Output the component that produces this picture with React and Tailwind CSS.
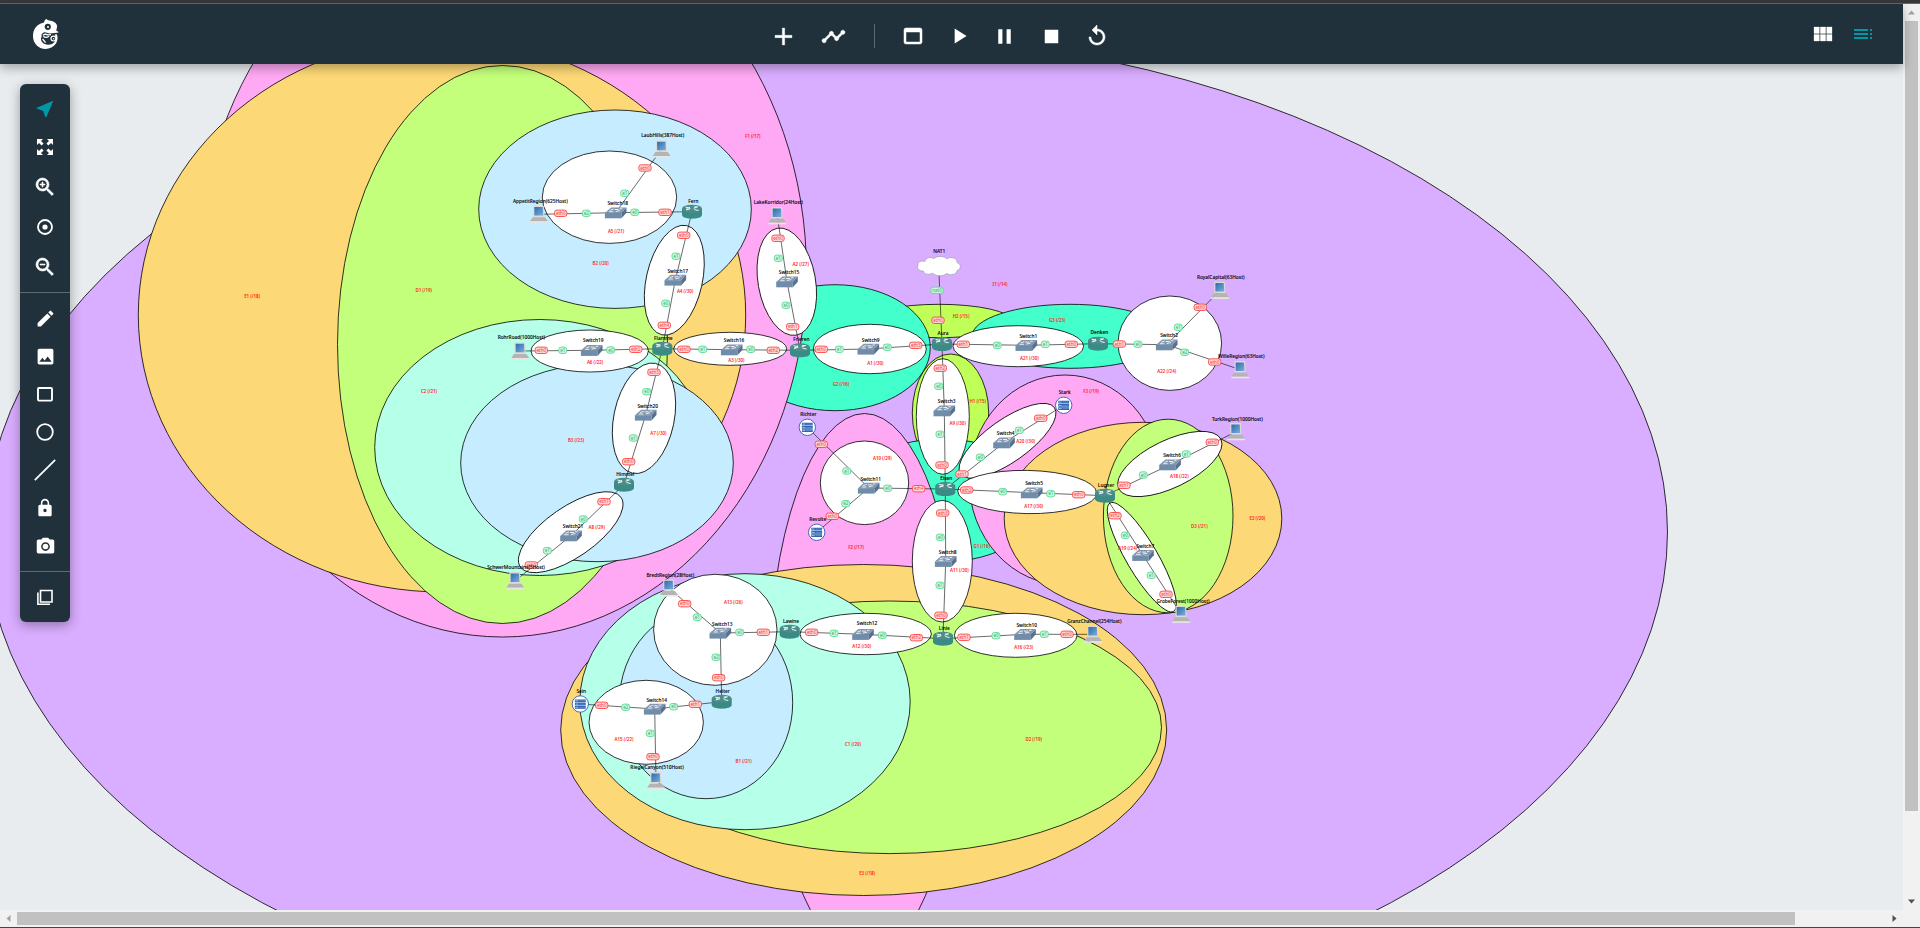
import React from "react";
import {
  MdAdd,
  MdTimeline,
  MdWebAsset,
  MdPlayArrow,
  MdPause,
  MdStop,
  MdReplay,
  MdViewModule,
  MdToc,
  MdNearMe,
  MdZoomIn,
  MdZoomOut,
  MdEdit,
  MdImage,
  MdLock,
  MdPhotoCamera,
} from "react-icons/md";

const PURPLE = "#d9adff";
const PINK = "#ffa8f3";
const ORANGE = "#fdd876";
const GREEN = "#c3ff7a";
const LIME = "#c0ff57";
const TEAL = "#43ffcb";
const MINT = "#b6ffe9";
const SKY = "#c6edff";
const WHITE = "#ffffff";

// fill, cx, cy, rx, ry, rotation; listed back to front
const ELLIPSES = [
  [PURPLE, 826.5, 532, 841, 500],
  [LIME, 939, 321, 73, 16.7],
  [LIME, 950.5, 413, 38.2, 59],
  [TEAL, 835, 347.7, 95.3, 63],
  [TEAL, 1070, 336.3, 98, 32],
  [TEAL, 942, 500.5, 100, 61.5],
  [PINK, 502.5, 272, 304, 365],
  [PINK, 864.5, 685.5, 96, 272],
  [PINK, 1065, 480, 96, 105],
  [ORANGE, 442, 315, 303.7, 277],
  [ORANGE, 1143, 518.5, 138.8, 96.2],
  [ORANGE, 863.7, 730, 303, 165.5],
  [GREEN, 502.5, 344.5, 165, 279],
  [GREEN, 889.5, 727.3, 272, 126.3],
  [GREEN, 1168.2, 516, 64.8, 96.8],
  [MINT, 539.7, 447.5, 165, 128],
  [MINT, 745, 701.7, 165.2, 128],
  [SKY, 615, 209.2, 136.3, 99.2],
  [SKY, 597, 463, 136.3, 98.7],
  [SKY, 706, 702.7, 86.7, 96],
  [WHITE, 609.5, 197.2, 67.2, 46.2],
  [WHITE, 674.3, 280.2, 28, 56, 12.8],
  [WHITE, 786.8, 281.7, 28.7, 54.3, -10],
  [WHITE, 589.7, 351, 58.7, 21],
  [WHITE, 730.2, 348.8, 56.5, 16.5],
  [WHITE, 869.8, 349, 56.5, 24.7],
  [WHITE, 644, 418.3, 30.2, 56.1, 11.7],
  [WHITE, 570.7, 532.2, 61.2, 25.1, -34.7],
  [WHITE, 942.8, 416.5, 26.5, 57.8],
  [WHITE, 1018.3, 346.2, 65.3, 20.5],
  [WHITE, 1169.8, 343.2, 51.8, 47.2],
  [WHITE, 1007.5, 440.8, 57.5, 21.2, -35.3],
  [WHITE, 1027.2, 492, 69.5, 21.6, 1],
  [WHITE, 864.5, 482.8, 44.2, 41.8],
  [WHITE, 942.3, 561.2, 30, 60.8],
  [WHITE, 865.7, 634, 65.7, 20.7],
  [WHITE, 1015.7, 635.3, 61.3, 22],
  [WHITE, 715.3, 629.8, 61.7, 55.5],
  [WHITE, 646.2, 722.3, 57.2, 42],
  [WHITE, 1169.8, 464, 56.8, 23.7, -25.8],
  [WHITE, 1141.8, 557.2, 15.6, 62.8, -30.4],
];

const SUBNETS = [
  ["F1 (/17)", 752.7, 136.7],
  ["E1 (/18)", 252, 296.7],
  ["D1 (/19)", 423.7, 290.3],
  ["A5 (/21)", 616, 231.7],
  ["B2 (/20)", 600.7, 263.3],
  ["A4 (/30)", 685, 291.3],
  ["A2 (/27)", 800.7, 264.3],
  ["A6 (/22)", 595, 362.7],
  ["A3 (/30)", 736.3, 360.3],
  ["B3 (/23)", 576, 440.3],
  ["A7 (/30)", 658.3, 433.3],
  ["A8 (/29)", 596.7, 527.3],
  ["C2 (/21)", 429, 391.3],
  ["G2 (/16)", 841, 384.3],
  ["A1 (/30)", 875.3, 363.3],
  ["H2 (/15)", 961, 316.7],
  ["I1 (/14)", 1000, 284.7],
  ["G3 (/23)", 1057.3, 320.3],
  ["A21 (/30)", 1029.3, 358.3],
  ["A22 (/24)", 1166.7, 371.7],
  ["H1 (/15)", 977.7, 401.3],
  ["A9 (/30)", 957.7, 423.3],
  ["F3 (/19)", 1091, 391.7],
  ["A20 (/30)", 1025.7, 441.3],
  ["E2 (/20)", 1257.3, 518.3],
  ["D3 (/21)", 1199.3, 526.3],
  ["A18 (/22)", 1179.3, 476.3],
  ["A10 (/29)", 882.3, 458.3],
  ["F2 (/17)", 856, 547.3],
  ["A17 (/30)", 1033.7, 506.7],
  ["A11 (/30)", 959.3, 570.3],
  ["G1 (/16)", 981.7, 546.7],
  ["A12 (/30)", 861.7, 646.7],
  ["A16 (/23)", 1023.7, 647.3],
  ["A13 (/26)", 733.3, 602.7],
  ["A15 (/22)", 624, 739.3],
  ["B1 (/21)", 743.7, 761.3],
  ["C1 (/20)", 853, 744.3],
  ["D2 (/19)", 1033.7, 739.3],
  ["E3 (/18)", 867, 873.3],
  ["A19 (/24)", 1127.7, 548.7],
];

// name: kind, icon centre, label centre
const NODES = {
  "LaubHills(387Host)": ["pc", 661.7, 149, 662.7, 135],
  "AppetitRegion(625Host)": ["pc", 539, 214.3, 540.3, 201],
  "LakeKorridor(24Host)": ["pc", 777.3, 215.7, 778.3, 202],
  "RohrRoad(1000Host)": ["pc", 520.3, 351, 521.3, 337],
  "SchwerMountains(5Host)": ["pc", 515.3, 580.7, 516, 567],
  "BredtRegion(28Host)": ["pc", 669, 588, 670.3, 575],
  "RiegelCanyon(510Host)": ["pc", 656, 780.7, 657, 767],
  "GranzChannel(254Host)": ["pc", 1093, 634.3, 1094.3, 621],
  "GrobeForest(1000Host)": ["pc", 1181.3, 614.3, 1183, 601.3],
  "TurkRegion(1000Host)": ["pc", 1236, 431.7, 1237.3, 419],
  "RoyalCapital(63Host)": ["pc", 1220, 290.3, 1220.7, 277],
  "WilleRegion(63Host)": ["pc", 1240.3, 369.7, 1241.3, 356],
  Fern: ["router", 692, 211.7, 693.3, 201],
  Flamme: ["router", 662.3, 348.7, 663.3, 338],
  Frieren: ["router", 800, 350.3, 801.3, 339.3],
  Himmel: ["router", 624, 484.7, 625.3, 474],
  Aura: ["router", 942, 344, 943, 333],
  Denken: ["router", 1098, 343.7, 1099.3, 332.3],
  Eisen: ["router", 945.3, 489, 946.3, 478],
  Lugner: ["router", 1105, 495.7, 1106, 485],
  Lawine: ["router", 789.7, 631.7, 791, 621.3],
  Linie: ["router", 943, 638.7, 944.3, 628],
  Heiter: ["router", 721.7, 701.7, 722.7, 691],
  Richter: ["server", 807.3, 427.3, 808.3, 414],
  Revolte: ["server", 816.7, 532.3, 817.7, 519],
  Stark: ["server", 1063.7, 405.3, 1064.7, 392],
  Sein: ["server", 580.3, 704, 581.3, 691],
  NAT1: ["cloud", 938.7, 266, 939.3, 251],
  Switch18: ["switch", 615.7, 212.7, 617.7, 203],
  Switch17: ["switch", 675.3, 280, 677.7, 271],
  Switch15: ["switch", 787, 281.7, 789, 272],
  Switch19: ["switch", 591.7, 350.3, 593.3, 340],
  Switch16: ["switch", 731.7, 349.7, 734, 340],
  Switch9: ["switch", 868.3, 349, 870.7, 340],
  Switch20: ["switch", 645.7, 415, 647.7, 406],
  Switch21: ["switch", 571, 535.7, 573, 526],
  Switch3: ["switch", 944.3, 410.7, 946.7, 401],
  Switch1: ["switch", 1026.3, 345.3, 1028.3, 336],
  Switch2: ["switch", 1166.7, 344.7, 1169, 335],
  Switch4: ["switch", 1004, 442.7, 1005.7, 433],
  Switch5: ["switch", 1031.7, 492.7, 1034, 483.3],
  Switch6: ["switch", 1170, 464.7, 1172, 455],
  Switch7: ["switch", 1143, 555.3, 1145.3, 546],
  Switch8: ["switch", 945.7, 561.3, 947.7, 552],
  Switch10: ["switch", 1025, 634.3, 1026.7, 625],
  Switch11: ["switch", 868.7, 488, 870.7, 479],
  Switch12: ["switch", 863, 634.3, 867, 623],
  Switch13: ["switch", 720.3, 633, 722.3, 624],
  Switch14: ["switch", 654.7, 709, 656.7, 700],
};

// from, to, then each end's port: name, x, y
const LINKS = [
  ["Switch18", "LaubHills(387Host)", ["eth0", 645, 168], ["e1", 624.7, 193.3]],
  ["Switch18", "AppetitRegion(625Host)", ["eth0", 560.7, 213.3], ["e2", 586.3, 213.3]],
  ["Switch18", "Fern", ["e0", 634.7, 212.3], ["eth1", 665, 212.3]],
  ["Fern", "Switch17", ["eth0", 683.7, 235.3], ["e1", 676, 256.3]],
  ["Switch17", "Flamme", ["e0", 665.7, 303.3], ["eth4", 664.3, 325.3]],
  ["LakeKorridor(24Host)", "Switch15", ["eth0", 778, 238.3], ["e1", 778.3, 258.3]],
  ["Switch15", "Frieren", ["e0", 786, 305.3], ["eth1", 792.7, 326.7]],
  ["RohrRoad(1000Host)", "Switch19", ["eth0", 541.3, 350.3], ["e1", 562.7, 350.3]],
  ["Switch19", "Flamme", ["e0", 610.7, 350], ["eth2", 635.7, 349.3]],
  ["Flamme", "Switch16", ["eth0", 684, 349.3], ["e1", 702.7, 349.3]],
  ["Switch16", "Frieren", ["e0", 750.7, 349.3], ["eth2", 773.3, 350.3]],
  ["Frieren", "Switch9", ["eth0", 821.3, 349.3], ["e1", 839.3, 349.3]],
  ["Switch9", "Aura", ["e0", 887.3, 347.3], ["eth3", 915.7, 345.3]],
  ["Flamme", "Switch20", ["eth3", 654, 372.3], ["e0", 646.7, 391.7]],
  ["Switch20", "Himmel", ["e1", 633.3, 438], ["eth0", 628.7, 461.7]],
  ["Himmel", "Switch21", ["eth1", 604, 501.7], ["e0", 583.3, 519]],
  ["Switch21", "SchwerMountains(5Host)", ["e1", 547.3, 550.7], ["eth0", 531.3, 565]],
  ["NAT1", "Aura", ["nat0", 937, 290.3], ["eth0", 938, 320.3]],
  ["Aura", "Switch1", ["eth1", 963.3, 344.3], ["e0", 997.3, 345.3]],
  ["Switch1", "Denken", ["e1", 1045.3, 344.3], ["eth0", 1071.3, 344.3]],
  ["Denken", "Switch2", ["eth1", 1119.3, 344], ["e0", 1138, 344.3]],
  ["Switch2", "RoyalCapital(63Host)", ["e1", 1178.3, 327.3], ["eth0", 1200.3, 307.3]],
  ["Switch2", "WilleRegion(63Host)", ["e2", 1184.7, 352.3], ["eth0", 1214.7, 362]],
  ["Aura", "Switch3", ["eth2", 940.3, 368.3], ["e0", 938.7, 386.3]],
  ["Switch3", "Eisen", ["e1", 940, 434.3], ["eth0", 942, 465]],
  ["Eisen", "Switch4", ["eth1", 962, 474], ["e0", 980.3, 457.3]],
  ["Switch4", "Stark", ["e1", 1019.3, 430.3], ["eth0", 1040.7, 418.3]],
  ["Eisen", "Switch5", ["eth2", 966.7, 490], ["e0", 1002.7, 491.7]],
  ["Switch5", "Lugner", ["e1", 1050.7, 493.7], ["eth0", 1078.7, 494.7]],
  ["Eisen", "Switch11", ["e0", 887.7, 488.3], ["eth4", 918.7, 488.7]],
  ["Switch11", "Richter", ["e1", 846.7, 471], ["eth0", 821.3, 444.3]],
  ["Switch11", "Revolte", ["e2", 845.7, 503.7], ["eth0", 832.3, 516.3]],
  ["Eisen", "Switch8", ["eth3", 942.7, 513], ["e0", 940.3, 537.3]],
  ["Switch8", "Linie", ["e1", 940, 585.3], ["eth0", 941, 615.3]],
  ["Linie", "Switch12", ["eth2", 916.3, 637.7], ["e0", 882.3, 635.3]],
  ["Switch12", "Lawine", ["e1", 834, 633.3], ["eth0", 811.7, 632.3]],
  ["Linie", "Switch10", ["eth1", 964, 637.3], ["e0", 996, 635.7]],
  ["Switch10", "GranzChannel(254Host)", ["e1", 1044.3, 634.3], ["eth0", 1067, 634.3]],
  ["Lawine", "Switch13", ["eth1", 763.3, 632.3], ["e0", 739.7, 632.3]],
  ["Switch13", "BredtRegion(28Host)", ["e1", 697.3, 617.3], ["eth0", 684.7, 603.7]],
  ["Switch13", "Heiter", ["e2", 716, 657.3], ["eth0", 718.7, 677.7]],
  ["Switch14", "Heiter", ["e0", 673.7, 706.7], ["eth1", 695.3, 704.3]],
  ["Switch14", "Sein", ["e2", 625.7, 707.3], ["eth0", 601.7, 705.3]],
  ["Switch14", "RiegelCanyon(510Host)", ["e1", 650.3, 733.3], ["eth0", 653, 756.7]],
  ["Lugner", "Switch6", ["eth1", 1124, 485.3], ["e0", 1143.3, 475]],
  ["Switch6", "TurkRegion(1000Host)", ["e1", 1186.3, 454], ["eth0", 1212.3, 442.3]],
  ["Lugner", "Switch7", ["eth2", 1115, 515.7], ["e0", 1125.3, 535.3]],
  ["Switch7", "GrobeForest(1000Host)", ["e1", 1151.3, 575.3], ["eth0", 1166, 594.3]],
];

function PcIcon() {
  return (
    <g>
      <path d="M-5.8 -8.6H4.8L5.4 2.8H-5.8Z" fill="#dadad6" />
      <path d="M-4.6 -7.3H3.7L4.2 1.2H-4.6Z" fill="url(#screen)" />
      <path d="M-6.3 3H6L9 7H-9Z" fill="#b4b4b4" />
      <path d="M-9 7H9V8.6H-9Z" fill="#e6e6e4" />
    </g>
  );
}

function RouterIcon() {
  return (
    <g>
      <path d="M-10 -3.2V3.4C-10 8.2 10 8.2 10 3.4V-3.2Z" fill="#3a8a86" />
      <ellipse cx="0" cy="-3" rx="10" ry="4" fill="#4d8c88" />
      <path
        d="M-6.5 -4.6L-2 -3.6M-6 -1.8L-1.6 -3M1.6 -3.4L6 -5M2.4 -2.2L6.6 -1.2M-2.6 -4.8V-3.3M2.2 -4.8H4.8M-5.6 -2.8H-3.6"
        stroke="#e8fbf9"
        strokeWidth="1"
        fill="none"
      />
    </g>
  );
}

function SwitchIcon() {
  return (
    <g>
      <path d="M-10.8 0.2L-4.6 -5.2H10.8L5.8 0.2Z" fill="#8398af" />
      <path d="M-10.8 0.2H5.8V5.6H-10.8Z" fill="#6f8cab" />
      <path d="M5.8 0.2L10.8 -5.2V0L5.8 5.6Z" fill="#56718f" />
      <path
        d="M-5.6 -2.4L-2 -3.6M-1 -3.2H3M-6.8 -1H-2.4M0 -1.2L4.4 -2.2M4 -4H6.6"
        stroke="#f4f7fa"
        strokeWidth="0.9"
        fill="none"
      />
    </g>
  );
}

function ServerIcon() {
  return (
    <g>
      <circle r="8.2" fill="#fff" stroke="#2a5fb0" strokeWidth="0.9" />
      <path d="M-5.4 -4.6H5.4V-1.8H-5.4ZM-5.4 -1.2H5.4V1.4H-5.4ZM-5.4 2H5.4V4.7H-5.4Z" fill="#2c62b4" />
      <path d="M-4.8 -3.2H-2M-4.8 0.1H-2M-4.8 3.3H-2" stroke="#dce8f8" strokeWidth="0.7" />
      <path d="M-1 -3.2H4.8M-1 0.1H4.8M-1 3.3H4.8" stroke="#7fa5da" strokeWidth="0.6" />
    </g>
  );
}

function CloudIcon() {
  return (
    <path
      d="M-14 -4.5C-13 -8.6 -8 -9.6 -5 -7.4C-2 -10.4 6 -10.2 8 -7.2C12 -10 19 -8 18.4 -3.4C23 -1.6 22.6 3.6 18.4 4.4C18.6 8.6 11 10 8 7.4C5 10.6 -3 10.6 -6 7.2C-10 9.4 -15.6 8 -15.4 5C-20 5.2 -22.6 1.6 -20.6 -0.8C-21.8 -4 -17.4 -5.8 -14 -4.5Z"
      fill="#fff"
      stroke="#a9a8bc"
      strokeWidth="0.9"
    />
  );
}

const NODE_ICONS = { pc: PcIcon, router: RouterIcon, switch: SwitchIcon, server: ServerIcon, cloud: CloudIcon };

function Port({ port }) {
  const [name, x, y] = port;
  const long = name.length > 2;
  const green = name[0] === "n" || !long;
  const w = long ? 12.4 : 8;
  return (
    <g transform={`translate(${x} ${y})`}>
      <rect
        x={-w / 2}
        y={-3.2}
        width={w}
        height={6.4}
        rx={2.4}
        fill={green ? "#ccf5de" : "#ffd6d6"}
        stroke={green ? "#55dc94" : "#ff4444"}
        strokeWidth="0.9"
      />
      <text y="1.6" textAnchor="middle" className="text-[4.5px]" fill={green ? "#3fae72" : "#f04545"}>
        {name}
      </text>
    </g>
  );
}

function Topology() {
  return (
    <svg className="block h-full w-full font-['Noto_Sans',sans-serif]" viewBox="0 64 1903 846">
      <defs>
        <linearGradient id="screen" x1="0" y1="0" x2="1" y2="1">
          <stop offset="0" stopColor="#2f6ba8" />
          <stop offset="1" stopColor="#79aede" />
        </linearGradient>
      </defs>
      {ELLIPSES.map(([fill, cx, cy, rx, ry, rot = 0], i) => (
        <ellipse
          key={i}
          cx={cx}
          cy={cy}
          rx={rx}
          ry={ry}
          fill={fill}
          stroke="#000"
          strokeWidth="0.8"
          transform={`rotate(${rot} ${cx} ${cy})`}
        />
      ))}
      {SUBNETS.map(([label, x, y]) => (
        <text
          key={label}
          x={x}
          y={y + 1.6}
          textAnchor="middle"
          className="text-[4.5px] font-semibold tracking-[-0.05px]"
          fill="#ff1a1a"
        >
          {label}
        </text>
      ))}
      {LINKS.map(([from, to]) => (
        <line
          key={from + to}
          x1={NODES[from][1]}
          y1={NODES[from][2]}
          x2={NODES[to][1]}
          y2={NODES[to][2]}
          stroke="#000"
          strokeOpacity="0.65"
          strokeWidth="0.9"
        />
      ))}
      {Object.entries(NODES).map(([name, [kind, x, y]]) => {
        const Icon = NODE_ICONS[kind];
        return (
          <g key={name} transform={`translate(${x} ${y})`}>
            <Icon />
          </g>
        );
      })}
      {LINKS.map(([from, to, a, b]) => (
        <g key={from + to}>
          <Port port={a} />
          <Port port={b} />
        </g>
      ))}
      {Object.entries(NODES).map(([name, [, , , lx, ly]]) => (
        <text
          key={name}
          x={lx}
          y={ly + 1.7}
          textAnchor="middle"
          className="text-[4.8px] font-medium"
          fill="#000"
          stroke="#000"
          strokeWidth="0.08"
        >
          {name}
        </text>
      ))}
    </svg>
  );
}

function Logo() {
  return (
    <svg width="26" height="30" viewBox="0 0 26 30" fill="none">
      <path
        fill="#fff"
        d="M13.4 0C14.8 1.7 17.4 1.4 19.6 2.3C22.8 3.5 24.8 6 24 8.6L23.2 11.4L26 13.2L23.6 14.8C25 17.4 25 21.6 23 24.6C20.6 28.2 16.6 30 12.6 30C5.4 30 0 24.4 0 17C0 10.4 4 4.8 11 3.6C11.2 2 12 0.6 13.4 0Z"
      />
      <path
        fill="#20313b"
        d="M26 13.4L17 14.6C14.6 14.2 12.4 13 10.8 13.4C9 14 7.8 15.6 8.8 17.4C7 19.8 8.4 23 11.2 24.8C14.4 26.6 18.8 26 21 23.6C22.8 21.6 23.4 18 22 16.2L21.6 15.4L26 14.8Z"
      />
      <circle cx="14.8" cy="7.8" r="3.1" fill="#20313b" />
      <circle cx="15" cy="8" r="1" fill="#fff" />
      <circle cx="20.4" cy="19.6" r="2.4" stroke="#fff" strokeWidth="1.2" />
      <circle cx="20.6" cy="19.8" r="0.7" fill="#fff" />
      <path
        d="M10 16.4C11.4 14.8 13.4 15.2 14.8 15.8L18 15.6M10.4 17.2C12 18.8 14 18.6 16 17.2M9.6 20L12.6 23.6"
        stroke="#fff"
        strokeWidth="1.3"
      />
    </svg>
  );
}

function FitIcon() {
  return (
    <svg width="24" height="24" viewBox="0 0 24 24" fill="#fff">
      <path d="M4 4H10L8 6L10.6 8.6L8.6 10.6L6 8L4 10Z" />
      <path d="M20 4H14L16 6L13.4 8.6L15.4 10.6L18 8L20 10Z" />
      <path d="M4 20H10L8 18L10.6 15.4L8.6 13.4L6 16L4 14Z" />
      <path d="M20 20H14L16 18L13.4 15.4L15.4 13.4L18 16L20 14Z" />
    </svg>
  );
}

function TargetIcon() {
  return (
    <svg width="24" height="24" viewBox="0 0 24 24" fill="none">
      <circle cx="12" cy="12" r="7" stroke="#fff" strokeWidth="1.8" />
      <circle cx="12" cy="12" r="2.6" fill="#fff" />
    </svg>
  );
}

function SquareIcon() {
  return (
    <svg width="24" height="24" viewBox="0 0 24 24" fill="none">
      <rect x="5" y="6" width="14" height="12.6" rx="1" stroke="#fff" strokeWidth="1.9" />
    </svg>
  );
}

function CircleIcon() {
  return (
    <svg width="24" height="24" viewBox="0 0 24 24" fill="none">
      <circle cx="12" cy="12" r="7.8" stroke="#fff" strokeWidth="1.8" />
    </svg>
  );
}

function LineIcon() {
  return (
    <svg width="24" height="24" viewBox="0 0 24 24" fill="none">
      <path d="M1.8 22.2L22.2 1.8" stroke="#fff" strokeWidth="1.8" />
    </svg>
  );
}

function LayersIcon() {
  return (
    <svg width="24" height="24" viewBox="0 0 24 24" fill="none">
      <path d="M7.5 5.5H19V17H7.5Z" stroke="#fff" strokeWidth="1.6" />
      <path d="M4.9 7.5V19.2H17" stroke="#fff" strokeWidth="1.6" />
    </svg>
  );
}

function Toolbar() {
  return (
    <nav className="absolute left-5 top-5 flex h-[538px] w-[50px] flex-col items-center rounded-md bg-[#20313b] text-white shadow-[0_3px_12px_rgba(0,0,0,0.35)]">
      <div className="flex h-[209px] w-full flex-col items-center border-b border-[#5d6a72] pt-[13px]">
        <MdNearMe size={22} className="mb-[15px] mt-[1px] text-[#0097a7]" />
        <FitIcon />
        <MdZoomIn size={24} className="mb-4 mt-4 stroke-white stroke-[0.6px] [&>path[fill=none]]:stroke-none" />
        <TargetIcon />
        <MdZoomOut size={24} className="mt-4 stroke-white stroke-[0.6px] [&>path[fill=none]]:stroke-none" />
      </div>
      <div className="flex h-[279px] w-full flex-col items-center gap-3.5 border-b border-[#5d6a72] pt-[13px]">
        <MdEdit size={21} className="my-[1.5px]" />
        <MdImage size={21} className="my-[1.5px]" />
        <SquareIcon />
        <CircleIcon />
        <LineIcon />
        <MdLock size={20} className="my-0.5" />
        <MdPhotoCamera size={21} className="my-0.5" />
      </div>
      <div className="pt-[13px]">
        <LayersIcon />
      </div>
    </nav>
  );
}

function Header() {
  return (
    <header className="relative z-10 flex h-[60px] shrink-0 items-center bg-[#20313b] text-white shadow-[0_4px_10px_rgba(0,0,0,0.3)]">
      <div className="w-[769px] pl-[33px]">
        <Logo />
      </div>
      <div className="flex flex-1 items-center pt-1">
        <MdAdd size={29} className="stroke-white stroke-[0.3px] [&>path[fill=none]]:stroke-none" />
        <MdTimeline size={25} className="ml-[23px] stroke-white stroke-[0.5px] [&>path[fill=none]]:stroke-none" />
        <span className="ml-[28px] h-6 w-px bg-[#5d6a72]" />
        <MdWebAsset size={24} className="ml-[26px] stroke-white stroke-[0.5px] [&>path[fill=none]]:stroke-none" />
        <MdPlayArrow size={26} className="ml-[21px]" />
        <MdPause size={25} className="ml-5" />
        <MdStop size={27} className="ml-[21px]" />
        <MdReplay size={24} className="ml-[20px] stroke-white stroke-[0.5px] [&>path[fill=none]]:stroke-none" />
      </div>
      <div className="flex items-center gap-4 pr-7">
        <MdViewModule size={24} className="stroke-white stroke-[0.3px] [&>path[fill=none]]:stroke-none" />
        <MdToc size={24} className="text-[#0097a7]" />
      </div>
    </header>
  );
}

export default function App() {
  return (
    <div className="flex h-[928px] w-[1920px] flex-col overflow-hidden bg-[#e8ecef]">
      <div className="h-1 shrink-0 border-b border-[#666] bg-[#383838]" />
      <div className="flex h-[906px]">
        <div className="flex w-[1903px] flex-col">
          <Header />
          <main className="relative h-[846px]">
            <Topology />
            <Toolbar />
          </main>
        </div>
        <div className="flex w-[17px] flex-col items-center bg-[#f1f1f1]">
          <svg width="17" height="17" viewBox="0 0 17 17">
            <path d="M5 10.5L8.5 6.5L12 10.5Z" fill="#a3a3a3" />
          </svg>
          <div className="h-[790px] w-[13px] bg-[#c1c1c1]" />
          <svg className="mt-auto" width="17" height="17" viewBox="0 0 17 17">
            <path d="M5 6.5L8.5 10.5L12 6.5Z" fill="#505050" />
          </svg>
        </div>
      </div>
      <div className="flex h-[17px] items-center bg-[#f1f1f1]">
        <svg width="17" height="17" viewBox="0 0 17 17">
          <path d="M10.5 5L6.5 8.5L10.5 12Z" fill="#a3a3a3" />
        </svg>
        <div className="h-[13px] w-[1778px] bg-[#c1c1c1]" />
        <svg className="ml-[91px]" width="17" height="17" viewBox="0 0 17 17">
          <path d="M6.5 5L10.5 8.5L6.5 12Z" fill="#505050" />
        </svg>
        <div className="ml-auto h-full w-[17px] bg-[#f1f1f1]" />
      </div>
      <div className="h-px bg-[#444]" />
    </div>
  );
}
